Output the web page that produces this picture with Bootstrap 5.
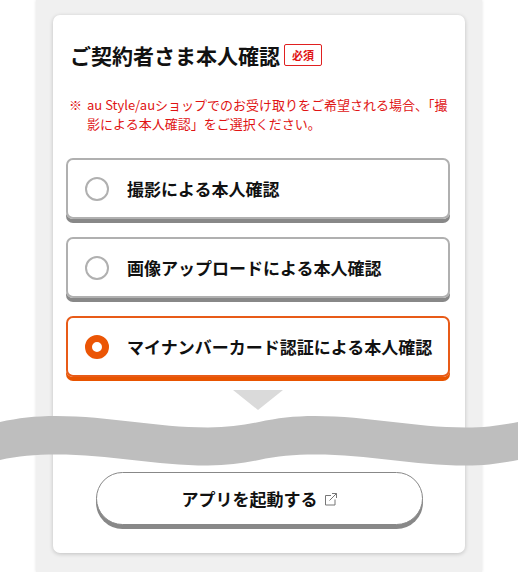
<!DOCTYPE html>
<html lang="ja">
<head>
<meta charset="utf-8">
<meta name="viewport" content="width=device-width, initial-scale=1">
<title>ご契約者さま本人確認</title>
<link href="https://cdn.jsdelivr.net/npm/bootstrap@5.3.0/dist/css/bootstrap.min.css" rel="stylesheet">
<style>
  body { font-family: "Noto Sans CJK JP", "Noto Sans", sans-serif; color: #111; background: #fff; }
  .stage { min-height: 100vh; padding: 0 36px; }
  .panel { background: #f0f0f0; padding: 15px 17px 19px; box-shadow: 0 0 3px rgba(0,0,0,.12); min-height: 100vh; }
  .sheet { background: #fff; border-radius: 7px; box-shadow: 0 1px 4px rgba(0,0,0,.2); padding: 24px 15px 28px 13px; }
  .heading { font-size: 21px; line-height: 32px; font-weight: 700; color: #111; }
  .required { font-size: 11px; line-height: 20px; font-weight: 700; color: #e01414; border: 1px solid #e02020; border-radius: 2px; padding: 0 7px; }
  .notice { font-size: 13px; line-height: 19px; color: #e01414; margin-top: 24px; gap: 5px; padding-left: 3px; }
  .options { gap: 18px; margin-top: 25px; }
  .option { height: 61px; gap: 18px; padding: 0 8px 0 17px; border: 2px solid #b0b0b0; border-radius: 7px; box-shadow: 0 4px 0 #888; font-size: 17px; line-height: 26px; font-weight: 700; cursor: pointer; }
  .option:has(:checked) { border-color: #e85b18; box-shadow: 0 4px 0 #e85400; }
  .option input { appearance: none; width: 24px; height: 24px; border: 2px solid #b0b0b0; border-radius: 50%; background: #fff; }
  .option input:checked { border: 7px solid #eb5505; }
  .pointer { margin-top: 13px; }
  .cut { height: 50px; margin-top: 6px; }
  .cut svg { position: absolute; left: 0; }
  .launch { margin: 6px 27px 0 30px; height: 53px; border: 1px solid #888; border-radius: 28px; box-shadow: 0 4px 0 #888; background: #fff; color: #111; font-size: 17px; font-weight: 700; gap: 6px; }
</style>
<script src="https://cdn.jsdelivr.net/npm/bootstrap@5.3.0/dist/js/bootstrap.bundle.min.js"></script>
</head>
<body>
<main class="stage position-relative overflow-hidden">
  <div class="panel">
    <form class="sheet">
      <div class="d-flex align-items-center gap-1 ps-1">
        <h1 class="heading mb-0" id="title">ご契約者さま本人確認</h1>
        <span class="required">必須</span>
      </div>
      <p class="notice d-flex mb-0">
        <span>※</span>
        <span>au Style/auショップでのお受け取りをご希望される場合、「撮影による本人確認」をご選択ください。</span>
      </p>
      <div class="options d-flex flex-column" role="radiogroup" aria-labelledby="title">
        <label class="option d-flex align-items-center" for="photo">
          <input class="flex-shrink-0 m-0" type="radio" name="method" id="photo"><span>撮影による本人確認</span>
        </label>
        <label class="option d-flex align-items-center" for="upload">
          <input class="flex-shrink-0 m-0" type="radio" name="method" id="upload"><span>画像アップロードによる本人確認</span>
        </label>
        <label class="option d-flex align-items-center" for="card">
          <input class="flex-shrink-0 m-0" type="radio" name="method" id="card" checked><span>マイナンバーカード認証による本人確認</span>
        </label>
      </div>
      <svg class="pointer d-block mx-auto" width="50" height="20" viewBox="0 0 50 20" aria-hidden="true"><path d="M0 0H50L25 20Z" fill="#dadada"/></svg>
      <div class="cut">
        <svg class="w-100" height="50" viewBox="0 0 518 50" preserveAspectRatio="none" aria-hidden="true">
          <path fill="#bebebe" d="M0 6C18 2 35 0 56 0C110 0 155 11.500 208 11.500C228 11.500 243 9 259 6C277 2 294 0 315 0C369 0 413 11.500 466 11.500C486 11.500 502 9 518 6V44C502 47 486 49.500 466 49.500C413 49.500 369 38.500 315 38.500C294 38.500 277 40 259 44C243 47 228 49.500 208 49.500C155 49.500 110 38.500 56 38.500C35 38.500 18 40 0 44Z"/>
        </svg>
      </div>
      <div class="d-flex">
        <button type="button" class="launch flex-grow-1 d-flex align-items-center justify-content-center">
          アプリを起動する
          <svg width="14" height="14" viewBox="0 0 14 14" fill="none" stroke="#777" aria-hidden="true"><path d="M7 3.500H1.500V13H11V7.500M5.500 8.500L12.500 1.500M8 1.500H12.500V6"/></svg>
        </button>
      </div>
    </form>
  </div>
</main>
</body>
</html>
